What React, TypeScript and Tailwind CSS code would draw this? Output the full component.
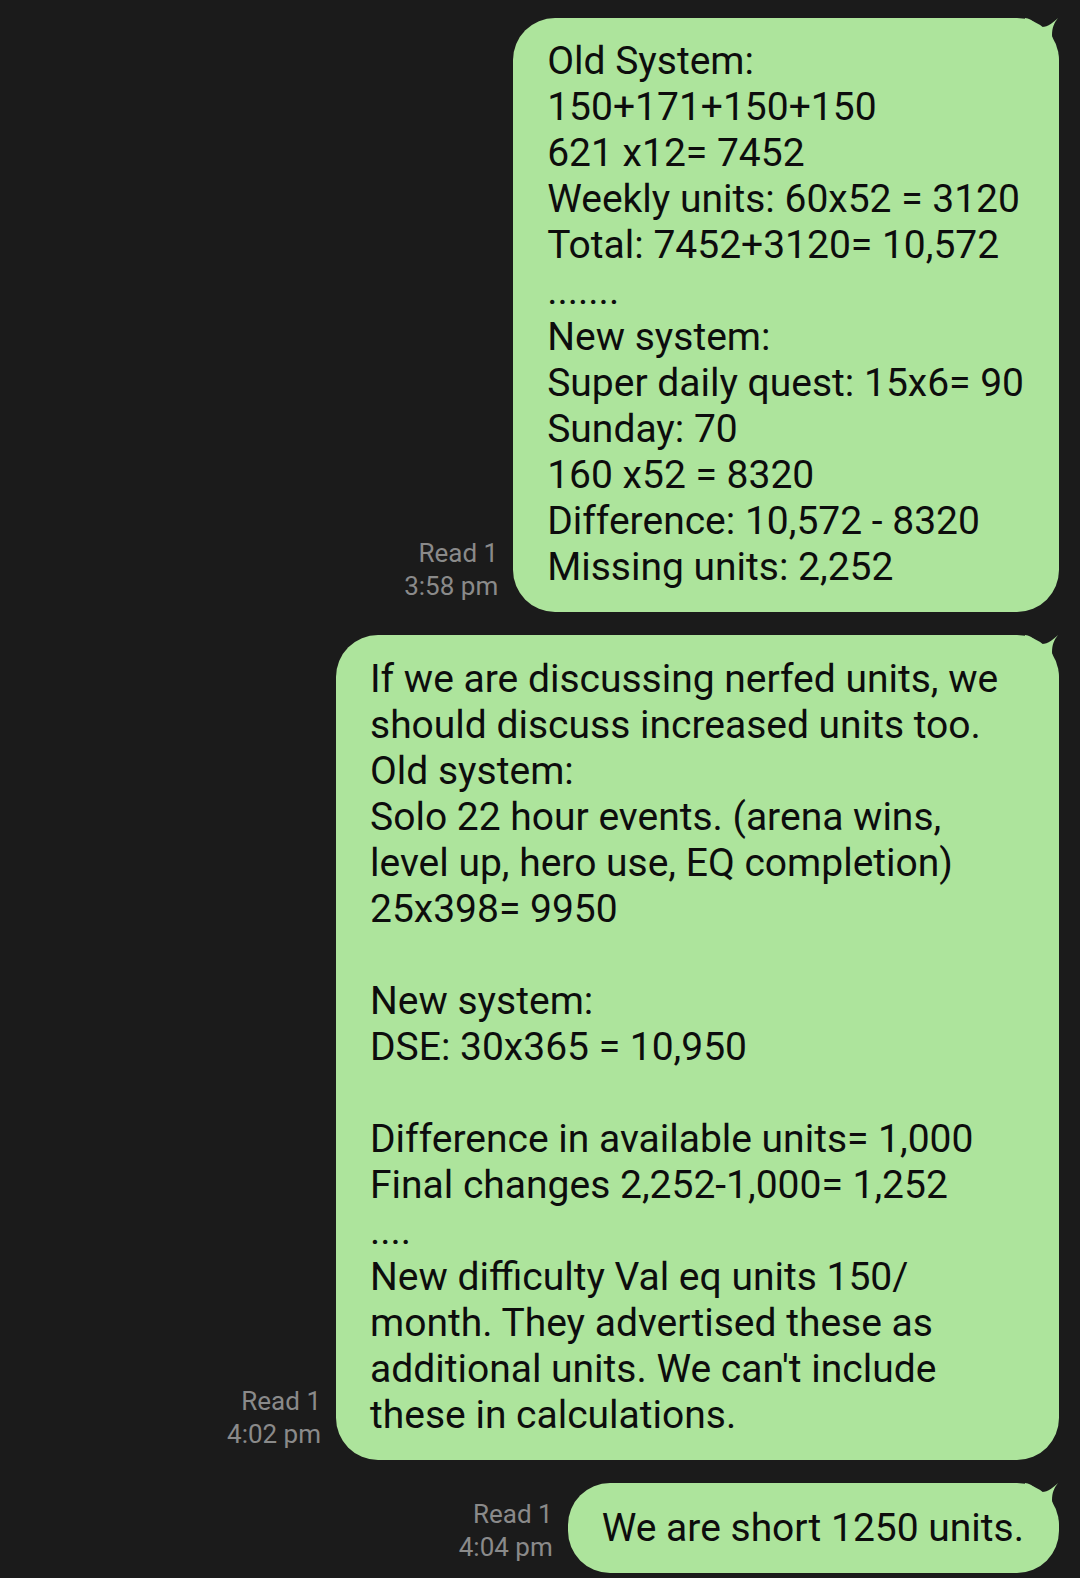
const first = [
  "Old System:",
  "150+171+150+150",
  "621 x12= 7452",
  "Weekly units: 60x52 = 3120",
  "Total: 7452+3120= 10,572",
  ".......",
  "New system:",
  "Super daily quest: 15x6= 90",
  "Sunday: 70",
  "160 x52 = 8320",
  "Difference: 10,572 - 8320",
  "Missing units: 2,252",
];

const second = [
  "If we are discussing nerfed units, we",
  "should discuss increased units too.",
  "Old system:",
  "Solo 22 hour events. (arena wins,",
  "level up, hero use, EQ completion)",
  "25x398= 9950",
  "",
  "New system:",
  "DSE: 30x365 = 10,950",
  "",
  "Difference in available units= 1,000",
  "Final changes 2,252-1,000= 1,252",
  "....",
  "New difficulty Val eq units 150/",
  "month. They advertised these as",
  "additional units. We can't include",
  "these in calculations.",
];

function Horn() {
  return (
    <svg
      className="absolute right-0 top-0"
      width="40"
      height="44"
      viewBox="0 0 40 44"
    >
      <path
        d="M6 0 C14 0 17 9 23 9 C29 9 35 4 39 0 C35 5 33 10 33 17 C33 25 40 30 40 44 L6 44 Z"
        fill="#ade49c"
      />
    </svg>
  );
}

function Bubble({
  lines,
  className = "",
}: {
  lines: string[];
  className?: string;
}) {
  return (
    <div
      className={
        "relative rounded-[42px] bg-[#ade49c] pl-[34px] pr-[35px] text-[39px] leading-[46px] text-[#0d0d0d] " +
        className
      }
    >
      <Horn />
      <div className="relative">
        {lines.map((l, i) => (
          <div key={i} className="whitespace-pre">
            {l === "" ? "\u00a0" : l}
          </div>
        ))}
      </div>
    </div>
  );
}

function Row({
  time,
  children,
}: {
  time: string;
  children: React.ReactNode;
}) {
  return (
    <div className="flex items-end gap-[15px]">
      <div className="mb-[9px] text-right text-[26px] leading-[33px] text-[#8a8a8a]">
        <div>Read 1</div>
        <div>{time}</div>
      </div>
      {children}
    </div>
  );
}

export default function App() {
  return (
    <div
      className="flex min-h-[1578px] w-[1080px] flex-col items-end gap-[23px] bg-[#1b1b1b] pr-[21px] pt-[18px]"
      style={{ fontFamily: "Roboto, 'Noto Sans', sans-serif" }}
    >
      <Row time="3:58 pm">
        <Bubble lines={first} className="pb-[22px] pt-[20px]" />
      </Row>
      <Row time="4:02 pm">
        <Bubble lines={second} className="w-[723px] pb-[22px] pt-[21px]" />
      </Row>
      <Row time="4:04 pm">
        <Bubble
          lines={["We are short 1250 units."]}
          className="pb-[22px] pt-[22px]"
        />
      </Row>
    </div>
  );
}
